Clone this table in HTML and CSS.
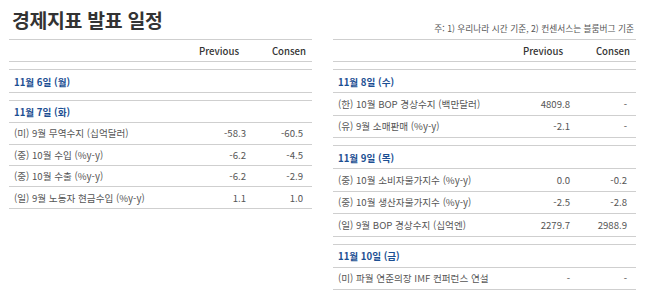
FILE: index.html
```html
<!DOCTYPE html>
<html lang="ko">
<head>
<meta charset="utf-8">
<link rel="stylesheet" href="styles.css">
</head>
<body>
<div class="page">
  <section class="col col-left">
    <div class="col-head">
      <h1 class="title">경제지표 발표 일정</h1>
    </div>
    <div class="tbl">
      <div class="row head"><span class="lbl"></span><span class="prev">Previous</span><span class="cons">Consen</span></div>
      <div class="group">
        <div class="row date"><span class="lbl">11월 6일 (월)</span></div>
      </div>
      <div class="group">
        <div class="row date"><span class="lbl">11월 7일 (화)</span></div>
        <div class="row item"><span class="lbl">(미) 9월 무역수지 (십억달러)</span><span class="prev">-58.3</span><span class="cons">-60.5</span></div>
        <div class="row item"><span class="lbl">(중) 10월 수입 (%y-y)</span><span class="prev">-6.2</span><span class="cons">-4.5</span></div>
        <div class="row item"><span class="lbl">(중) 10월 수출 (%y-y)</span><span class="prev">-6.2</span><span class="cons">-2.9</span></div>
        <div class="row item"><span class="lbl">(일) 9월 노동자 현금수입 (%y-y)</span><span class="prev">1.1</span><span class="cons">1.0</span></div>
      </div>
    </div>
  </section>
  <section class="col col-right">
    <div class="col-head">
      <p class="note">주: 1) 우리나라 시간 기준, 2) 컨센서스는 블룸버그 기준</p>
    </div>
    <div class="tbl">
      <div class="row head"><span class="lbl"></span><span class="prev">Previous</span><span class="cons">Consen</span></div>
      <div class="group">
        <div class="row date"><span class="lbl">11월 8일 (수)</span></div>
        <div class="row item"><span class="lbl">(한) 10월 BOP 경상수지 (백만달러)</span><span class="prev">4809.8</span><span class="cons">-</span></div>
        <div class="row item"><span class="lbl">(유) 9월 소매판매 (%y-y)</span><span class="prev">-2.1</span><span class="cons">-</span></div>
      </div>
      <div class="group">
        <div class="row date"><span class="lbl">11월 9일 (목)</span></div>
        <div class="row item"><span class="lbl">(중) 10월 소비자물가지수 (%y-y)</span><span class="prev">0.0</span><span class="cons">-0.2</span></div>
        <div class="row item"><span class="lbl">(중) 10월 생산자물가지수 (%y-y)</span><span class="prev">-2.5</span><span class="cons">-2.8</span></div>
        <div class="row item"><span class="lbl">(일) 9월 BOP 경상수지 (십억엔)</span><span class="prev">2279.7</span><span class="cons">2988.9</span></div>
      </div>
      <div class="group">
        <div class="row date"><span class="lbl">11월 10일 (금)</span></div>
        <div class="row item"><span class="lbl">(미) 파월 연준의장 IMF 컨퍼런스 연설</span><span class="prev">-</span><span class="cons">-</span></div>
      </div>
    </div>
  </section>
</div>
</body>
</html>
```

FILE: styles.css
```css
html, body {
  margin: 0;
  padding: 0;
  background: #ffffff;
}
body {
  font-family: "Noto Sans CJK KR", "Noto Sans", sans-serif;
  color: #555;
}
.page {
  display: flex;
  gap: 21px;
  padding-left: 9px;
}
.col {
  width: 303px;
}
.col-head {
  height: 39px;
  display: flex;
  align-items: flex-end;
}
.title {
  margin: 0 0 7px 3px;
  font-size: 19.4px;
  line-height: 24px;
  font-weight: 700;
  color: #333;
  letter-spacing: -0.3px;
}
.note {
  margin: 0 0 4px auto;
  padding-right: 2px;
  font-size: 8.7px;
  line-height: 12px;
  color: #555;
}
.tbl {
  border-top: 1px solid #cfcfcf;
}
.group {
  margin-top: 7px;
  border-top: 1px solid #cfcfcf;
}
.row {
  display: flex;
  align-items: center;
  box-sizing: border-box;
  height: 22.4px;
  border-bottom: 1px solid #cfcfcf;
  font-size: 9.6px;
}
.col-left .item {
  height: 21.4px;
}
.col-right .item {
  height: 22.8px;
}
.lbl {
  flex: 1;
  padding-left: 5px;
  white-space: nowrap;
}
.prev {
  width: 70px;
  box-sizing: border-box;
  padding-right: 9px;
  text-align: right;
}
.cons {
  width: 57px;
  box-sizing: border-box;
  padding-right: 9px;
  text-align: right;
}
.head {
  color: #333;
  font-size: 9.6px;
  font-weight: 500;
}
.head .prev {
  padding-right: 16px;
}
.head .cons {
  padding-right: 6px;
}
.date {
  color: #1c4f93;
  font-weight: 700;
}
.date .lbl {
  padding-top: 1px;
}
```
